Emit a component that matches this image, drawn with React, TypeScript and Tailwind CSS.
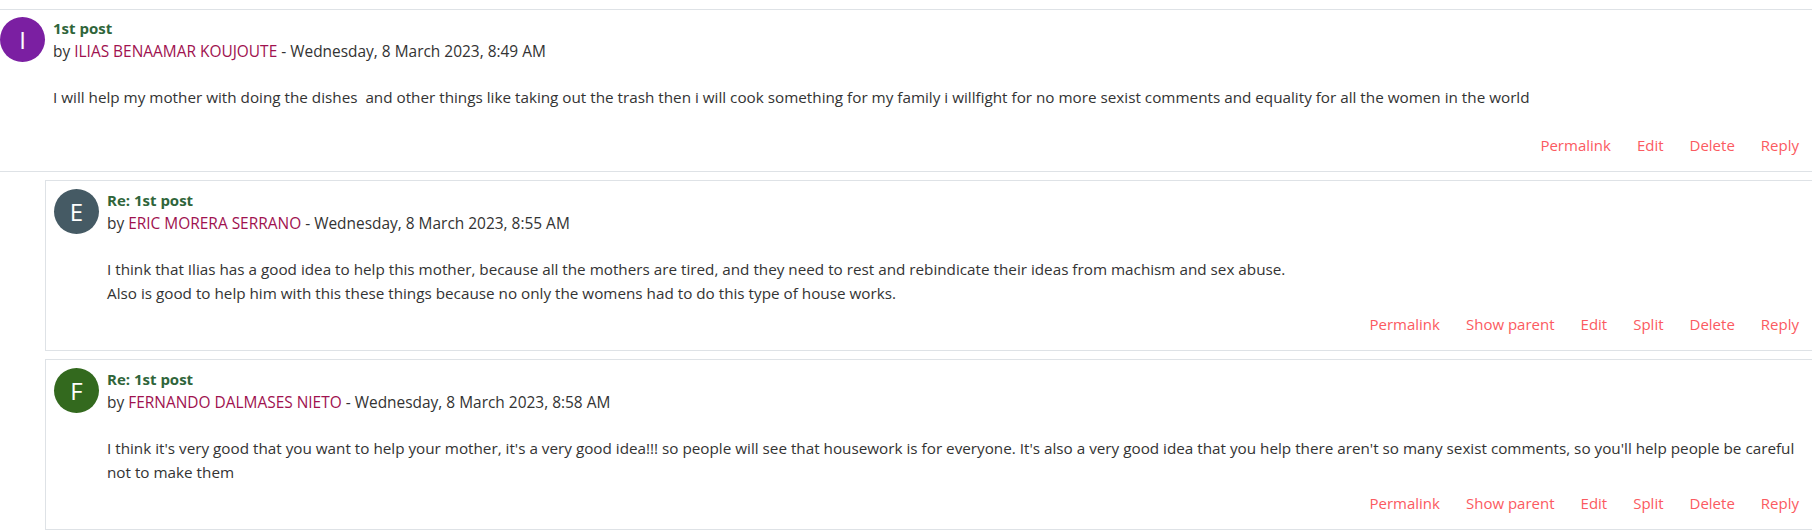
import React from "react";

type PostProps = {
  avatarBg: string;
  letter: string;
  title: string;
  author: string;
  date: string;
  lines: React.ReactNode;
  actions: string[];
  actionsGap: string;
};

function PostBody({ avatarBg, letter, title, author, date, lines, actions, actionsGap }: PostProps) {
  return (
    <div>
      <div className="flex">
        <div
          className={`w-[45px] h-[45px] shrink-0 rounded-full flex items-center justify-center text-white text-[24px] leading-none ${avatarBg}`}
        >
          {letter}
        </div>
        <div className="ml-[8px]">
          <div className="text-[15px] leading-[22.5px] font-bold text-[#2f653a]">{title}</div>
          <div className="text-[15.45px] leading-[22.5px] text-[#333]">
            by <span className="text-[#a0124f]">{author}</span> - {date}
          </div>
        </div>
      </div>
      <div className="mt-6 pl-[53px] text-[15.25px] leading-[23.5px] text-[#333] whitespace-pre-wrap pr-[13px]">
        {lines}
      </div>
      <div className={`flex justify-end ${actionsGap}`}>
        {actions.map((a) => (
          <span key={a} className="px-[13px] text-[15px] leading-[22.5px] text-[#fb5a61]">
            {a}
          </span>
        ))}
      </div>
    </div>
  );
}

export default function App() {
  return (
    <div className="w-[1812px] h-[532px] overflow-hidden bg-white font-['Open_Sans',sans-serif]">
      <div className="h-[9px]" />
      <div className="border-y border-[#dee2e6] pt-[7px] pb-[14.5px]">
        <PostBody
          avatarBg="bg-[#7b1fa2]"
          letter="I"
          title="1st post"
          author="ILIAS BENAAMAR KOUJOUTE"
          date="Wednesday, 8 March 2023, 8:49 AM"
          lines={
            "I will help my mother with doing the dishes  and other things like taking out the trash then i will cook something for my family i willfight for no more sexist comments and equality for all the women in the world"
          }
          actions={["Permalink", "Edit", "Delete", "Reply"]}
          actionsGap="mt-[24.5px]"
        />
      </div>
      <div className="pl-[45px] pt-2">
        <div className="border border-r-0 border-[#dee2e6] pt-2 pl-2 pb-[14.5px]">
          <PostBody
            avatarBg="bg-[#455a64]"
            letter="E"
            title="Re: 1st post"
            author="ERIC MORERA SERRANO"
            date="Wednesday, 8 March 2023, 8:55 AM"
            lines={
              <>
                I think that Ilias has a good idea to help this mother, because all the mothers are tired, and they need to rest and rebindicate their ideas from machism and sex abuse.
                <br />
                Also is good to help him with this these things because no only the womens had to do this type of house works.
              </>
            }
            actions={["Permalink", "Show parent", "Edit", "Split", "Delete", "Reply"]}
            actionsGap="mt-2"
          />
        </div>
        <div className="mt-2 border border-r-0 border-[#dee2e6] pt-2 pl-2 pb-[14.5px]">
          <PostBody
            avatarBg="bg-[#33691e]"
            letter="F"
            title="Re: 1st post"
            author="FERNANDO DALMASES NIETO"
            date="Wednesday, 8 March 2023, 8:58 AM"
            lines={
              "I think it's very good that you want to help your mother, it's a very good idea!!! so people will see that housework is for everyone. It's also a very good idea that you help there aren't so many sexist comments, so you'll help people be careful not to make them"
            }
            actions={["Permalink", "Show parent", "Edit", "Split", "Delete", "Reply"]}
            actionsGap="mt-2"
          />
        </div>
      </div>
    </div>
  );
}
